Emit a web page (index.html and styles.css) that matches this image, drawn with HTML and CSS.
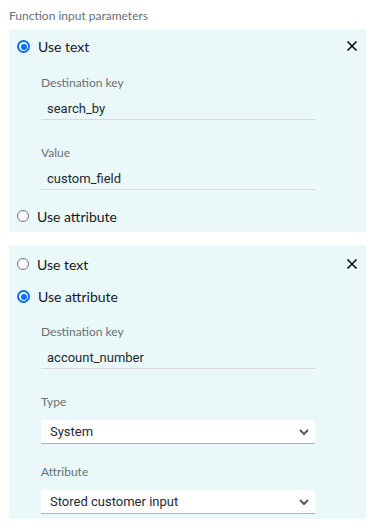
FILE: index.html
```html
<!DOCTYPE html>
<html lang="en">
<head>
    <meta charset="UTF-8">
    <meta name="viewport" content="width=device-width, initial-scale=1.0">
    <title>Function input parameters</title>
    <link rel="stylesheet" href="styles.css">
</head>
<body>
    <div class="container">
        <div class="section-title">Function input parameters</div>

        <div class="param-panel first">
            <div class="option">
                <span class="radio checked"></span>
                <span class="option-label">Use text</span>
                <button class="close-btn" title="Remove">
                    <svg width="12" height="12" viewBox="0 0 12 12"><path d="M1.5 1.5 L10.5 10.5 M10.5 1.5 L1.5 10.5" stroke="#000" stroke-width="1.5" fill="none"/></svg>
                </button>
            </div>
            <div class="fields">
                <div class="field">
                    <label class="field-label">Destination key</label>
                    <div class="text-input">search_by</div>
                </div>
                <div class="field">
                    <label class="field-label">Value</label>
                    <div class="text-input">custom_field</div>
                </div>
            </div>
            <div class="option last">
                <span class="radio"></span>
                <span class="option-label">Use attribute</span>
            </div>
        </div>

        <div class="param-panel second">
            <div class="option">
                <span class="radio"></span>
                <span class="option-label">Use text</span>
                <button class="close-btn" title="Remove">
                    <svg width="12" height="12" viewBox="0 0 12 12"><path d="M1.5 1.5 L10.5 10.5 M10.5 1.5 L1.5 10.5" stroke="#000" stroke-width="1.5" fill="none"/></svg>
                </button>
            </div>
            <div class="option">
                <span class="radio checked"></span>
                <span class="option-label">Use attribute</span>
            </div>
            <div class="fields">
                <div class="field">
                    <label class="field-label">Destination key</label>
                    <div class="text-input">account_number</div>
                </div>
                <div class="field">
                    <label class="field-label">Type</label>
                    <div class="select-box">
                        <span>System</span>
                        <svg width="12" height="8" viewBox="0 0 12 8"><path d="M2 2 L6 6 L10 2" stroke="#545b64" stroke-width="2" fill="none"/></svg>
                    </div>
                </div>
                <div class="field">
                    <label class="field-label">Attribute</label>
                    <div class="select-box">
                        <span>Stored customer input</span>
                        <svg width="12" height="8" viewBox="0 0 12 8"><path d="M2 2 L6 6 L10 2" stroke="#545b64" stroke-width="2" fill="none"/></svg>
                    </div>
                </div>
            </div>
        </div>
    </div>
</body>
</html>
```

FILE: styles.css
```css
body {
    font-family: Lato, "Noto Sans", sans-serif;
    margin: 0;
    background-color: #ffffff;
    color: #16191f;
}
.container {
    padding: 8px 12px 0 9px;
}
.section-title {
    font-size: 12px;
    line-height: 16px;
    color: #687078;
    height: 21px;
}
.param-panel {
    background-color: #eaf8fa;
    width: 357px;
}
.param-panel.first {
    padding-top: 1px;
    margin-bottom: 13px;
}
.param-panel.second {
    padding-top: 3px;
    padding-bottom: 5px;
}
.option {
    display: flex;
    align-items: center;
    height: 32px;
    padding-left: 8px;
}
.option.last {
    margin-top: 10px;
}
.option-label {
    font-size: 14px;
    margin-left: 8px;
}
.radio {
    width: 10px;
    height: 10px;
    border: 1px solid #687078;
    border-radius: 50%;
    background-color: #fff;
    box-sizing: content-box;
}
.radio.checked {
    width: 6px;
    height: 6px;
    border: 2px solid #0a6ff0;
    background-color: #0a6ff0;
    padding: 1.5px;
    background-clip: content-box;
}
.close-btn {
    margin-left: auto;
    margin-right: 8px;
    border: none;
    background: none;
    padding: 0;
    width: 12px;
    height: 12px;
    display: flex;
    cursor: pointer;
}
.fields {
    padding-left: 32px;
    margin-top: 13px;
    display: flex;
    flex-direction: column;
    gap: 25px;
}
.param-panel.second .fields {
    margin-top: 12px;
    gap: 20px;
}
.field {
    display: flex;
    flex-direction: column;
    width: 274px;
}
.field-label {
    font-size: 12px;
    line-height: 16px;
    color: #687078;
    margin-bottom: 7px;
}
.text-input {
    font-family: Roboto, Arial, sans-serif;
    font-size: 13px;
    height: 21px;
    line-height: 21px;
    padding-left: 6px;
    border-bottom: 1px solid #d5dbdb;
    color: #232a31;
}
.param-panel.second .field:first-child {
    margin-bottom: 5px;
}
.select-box {
    display: flex;
    align-items: center;
    justify-content: space-between;
    font-family: Roboto, Arial, sans-serif;
    font-size: 13px;
    height: 23px;
    padding: 0 5px 0 9px;
    margin-top: 3px;
    background-color: #fff;
    border-radius: 3px 3px 0 0;
    border-bottom: 1px solid #aab7b8;
    color: #232a31;
}
```
